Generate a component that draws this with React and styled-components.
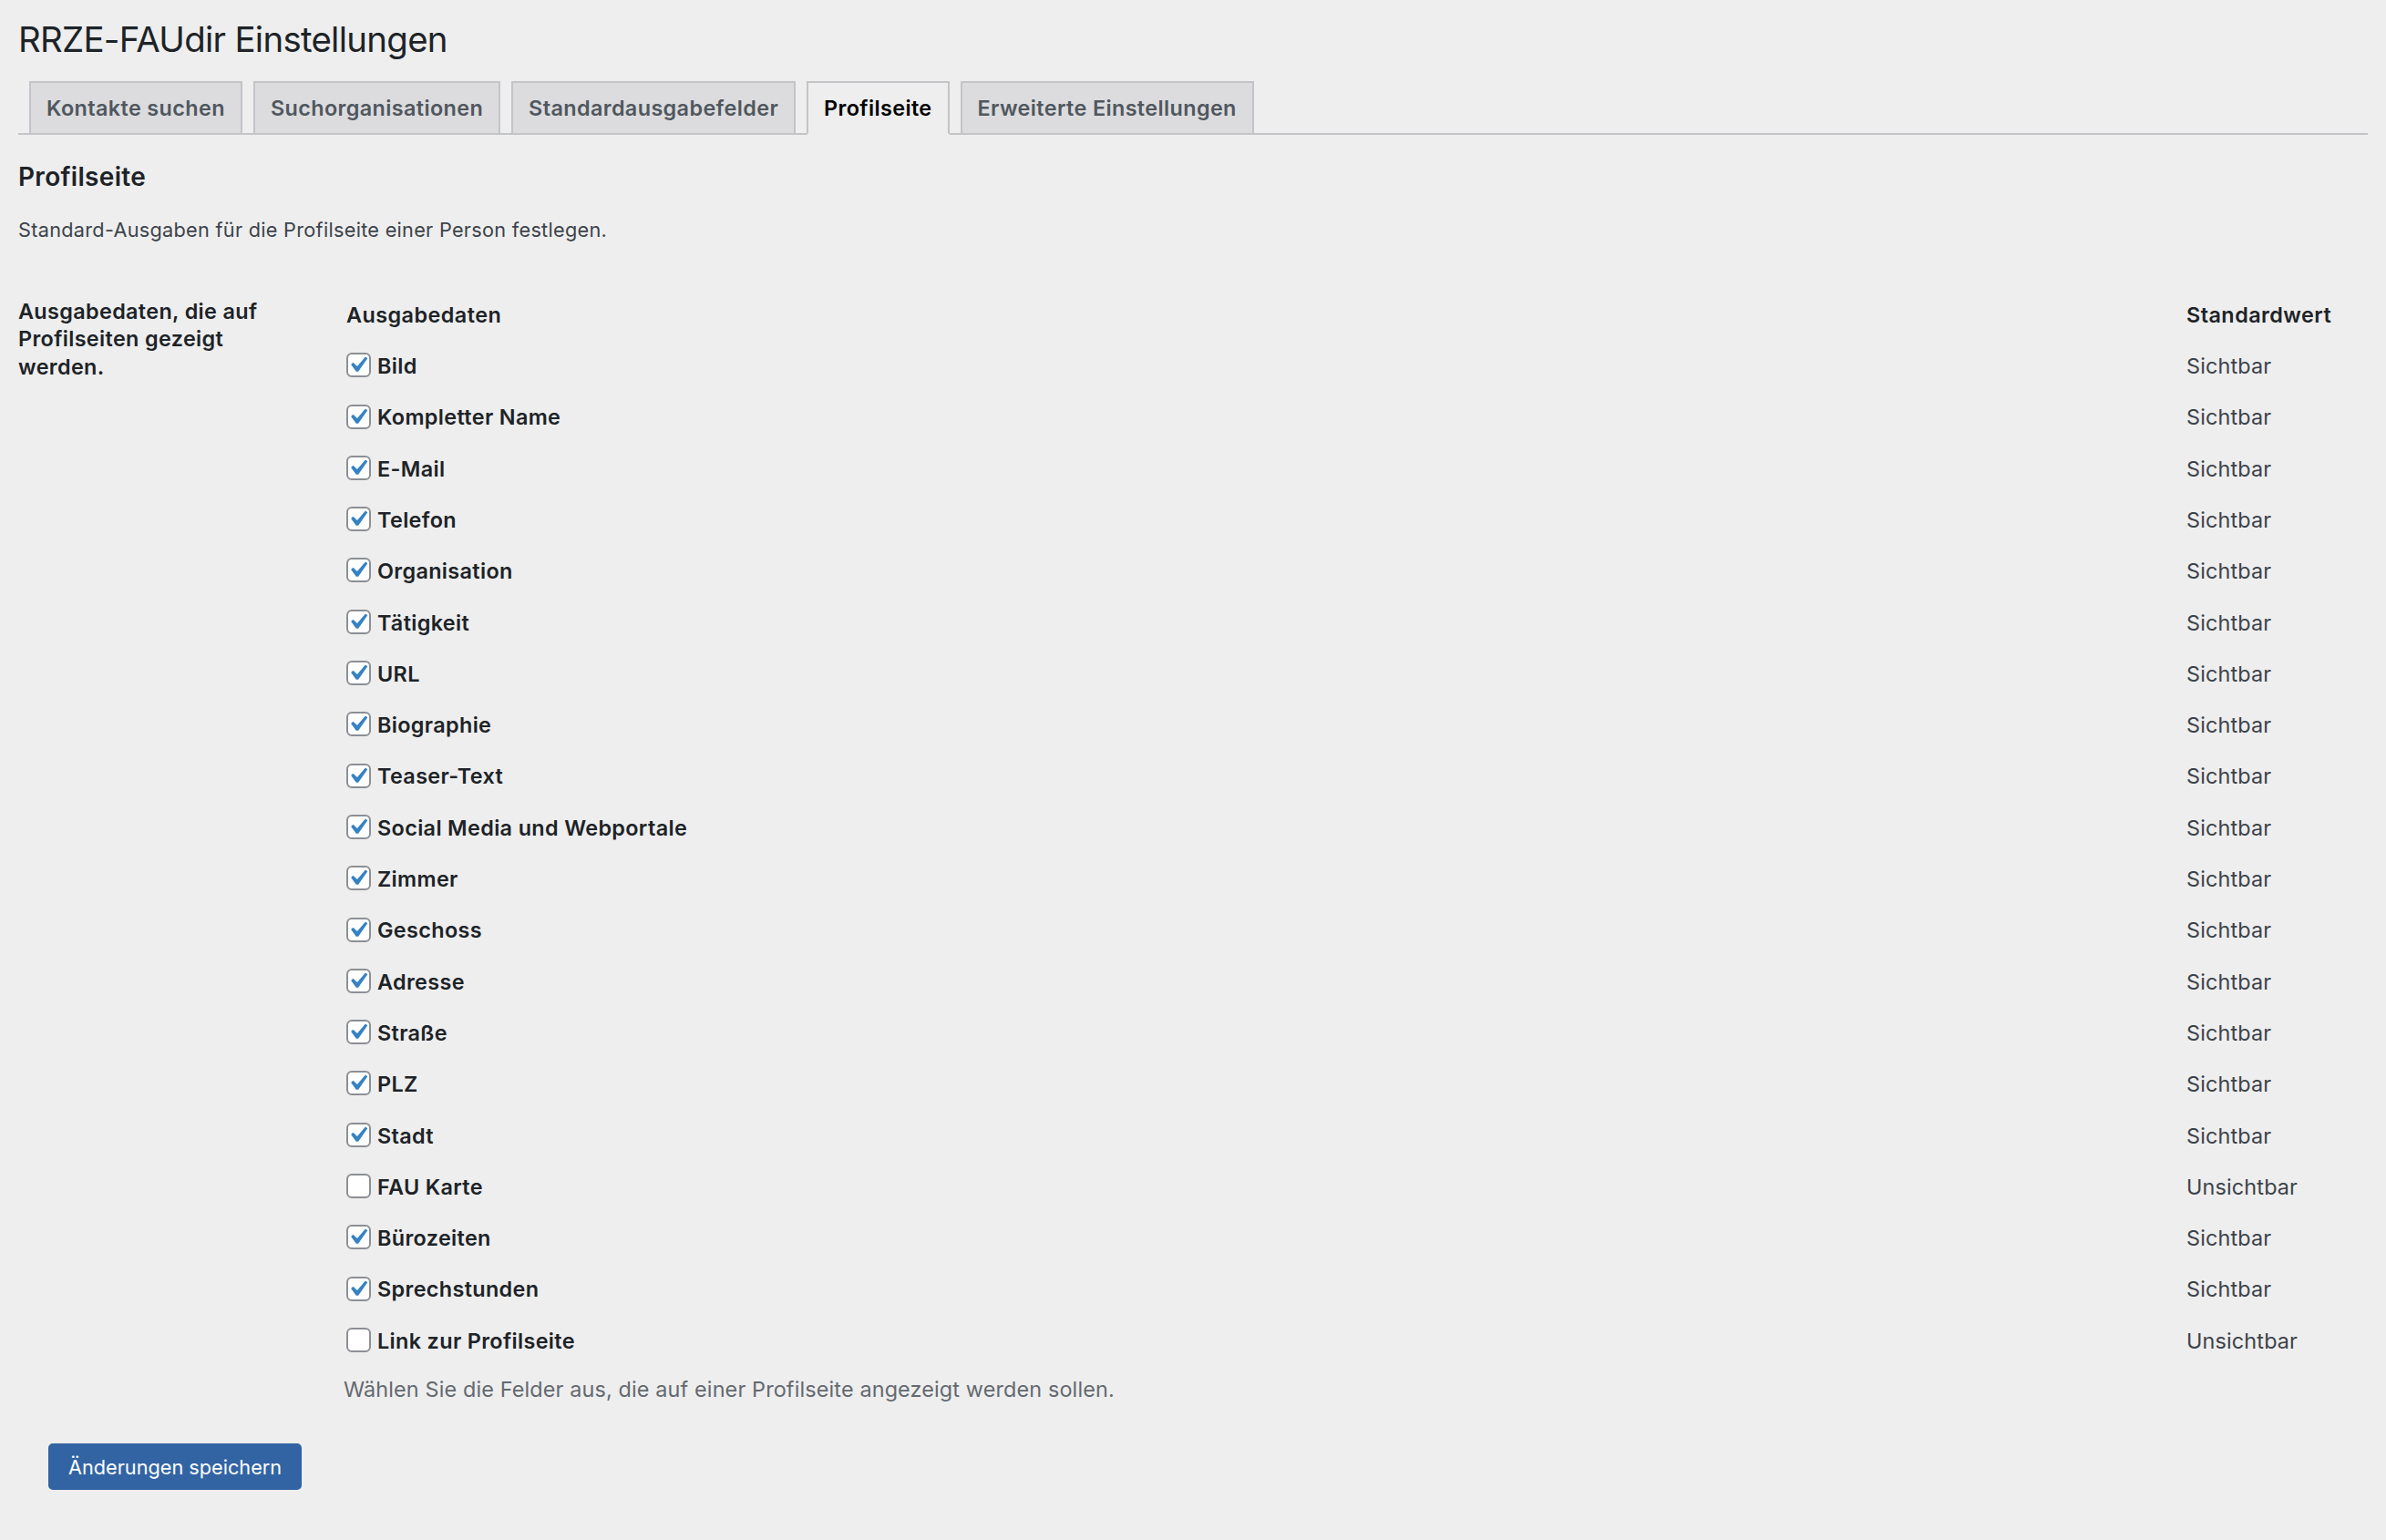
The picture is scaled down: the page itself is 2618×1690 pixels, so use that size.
import React from "react";
import styled, { createGlobalStyle } from "styled-components";

const GlobalStyle = createGlobalStyle`
  html, body {
    margin: 0;
    padding: 0;
    background: #eeeeee;
  }
  body {
    font-family: Inter, "Noto Sans", "Liberation Sans", sans-serif;
    color: #3c434a;
    font-size: 21.7px;
    min-height: 1690px;
  }
  * { box-sizing: border-box; }
`;

const Wrap = styled.div`
  padding: 0 20px 40px 20px;
`;

const Title = styled.h1`
  margin: 0;
  padding-top: 18px;
  font-size: 38.4px;
  line-height: 50px;
  font-weight: 400;
  letter-spacing: -0.7px;
  color: #1d2327;
`;

const TabBar = styled.nav`
  display: flex;
  gap: 12px;
  margin-top: 21px;
  padding-left: 12px;
  border-bottom: 2px solid #c3c4c7;
`;

const Tab = styled.a`
  display: block;
  margin-bottom: -2px;
  padding: 8px 17px;
  line-height: 39px;
  font-size: 23.4px;
  font-weight: 600;
  letter-spacing: 0.38px;
  text-decoration: none;
  border: 2px solid #c3c4c7;
  background: ${(p) => (p.$active ? "#eeeeee" : "#dcdcde")};
  border-bottom-color: ${(p) => (p.$active ? "#eeeeee" : "#c3c4c7")};
  color: ${(p) => (p.$active ? "#000" : "#50575e")};
  white-space: nowrap;
`;

const SectionTitle = styled.h2`
  margin: 27px 0 0;
  font-size: 28px;
  line-height: 39.2px;
  font-weight: 600;
  letter-spacing: 0.3px;
  color: #1d2327;
`;

const Intro = styled.p`
  margin: 22.6px 0 0;
  line-height: 30.4px;
  letter-spacing: 0.28px;
  color: #3c434a;
`;

const FormTable = styled.div`
  display: grid;
  grid-template-columns: 360px 1fr;
  margin-top: 50.6px;
  font-size: 23.4px;
`;

const RowHead = styled.div`
  padding-top: 9px;
  width: 305px;
  font-weight: 600;
  line-height: 30.4px;
  letter-spacing: 0.35px;
  color: #1d2327;
`;

const FieldCell = styled.div`
  display: flex;
  flex-direction: column;
`;

const FieldList = styled.div`
  display: grid;
  grid-template-columns: 1fr 199px;
  grid-auto-rows: 56.3px;
`;

const Cell = styled.div`
  padding-top: 13px;
  line-height: 30.4px;
  font-weight: ${(p) => (p.$bold ? 600 : 400)};
  letter-spacing: ${(p) => (p.$bold ? "0.45px" : "0.15px")};
  color: ${(p) => (p.$bold ? "#1d2327" : "#3c434a")};
  white-space: nowrap;
`;

const Label = styled.label`
  display: flex;
  align-items: center;
  gap: 7px;
  padding-top: 13px;
  height: 43.4px;
  line-height: 30.4px;
  font-weight: 600;
  letter-spacing: 0.35px;
  color: #1d2327;
  white-space: nowrap;
`;

const Box = styled.span`
  position: relative;
  flex: none;
  width: 27px;
  height: 27px;
  margin-bottom: 3px;
  border: 2px solid #8c8f94;
  border-radius: 6px;
  background: #ffffff;
  svg {
    position: absolute;
    left: -7px;
    top: -6px;
    width: 35px;
    height: 35px;
  }
`;

const Hint = styled.p`
  margin: 10px 0 0 -3px;
  line-height: 30.4px;
  letter-spacing: 0.14px;
  color: #646970;
`;

const Submit = styled.div`
  margin-top: 43.6px;
  padding-left: 33px;
`;

const Button = styled.button`
  display: inline-flex;
  align-items: center;
  height: 51px;
  padding: 0 20px;
  border: 2px solid #3264a3;
  border-radius: 5px;
  background: #3264a3;
  color: #ffffff;
  font-family: inherit;
  font-size: 21.7px;
  cursor: pointer;
`;

const Check = ({ checked }) => (
  <Box>
    {checked && (
      <svg viewBox="0 0 20 20">
        <path
          d="M14.83 4.89l1.34.94-5.81 8.38H9.02L5.78 9.67l1.34-1.25 2.57 2.4z"
          fill="#3582c4"
        />
      </svg>
    )}
  </Box>
);

const tabs = [
  "Kontakte suchen",
  "Suchorganisationen",
  "Standardausgabefelder",
  "Profilseite",
  "Erweiterte Einstellungen",
];

const fields = [
  ["Bild", true],
  ["Kompletter Name", true],
  ["E-Mail", true],
  ["Telefon", true],
  ["Organisation", true],
  ["Tätigkeit", true],
  ["URL", true],
  ["Biographie", true],
  ["Teaser-Text", true],
  ["Social Media und Webportale", true],
  ["Zimmer", true],
  ["Geschoss", true],
  ["Adresse", true],
  ["Straße", true],
  ["PLZ", true],
  ["Stadt", true],
  ["FAU Karte", false],
  ["Bürozeiten", true],
  ["Sprechstunden", true],
  ["Link zur Profilseite", false],
];

export default function App() {
  return (
    <>
      <GlobalStyle />
      <Wrap>
        <Title>RRZE-FAUdir Einstellungen</Title>
        <TabBar>
          {tabs.map((t) => (
            <Tab key={t} $active={t === "Profilseite"}>
              {t}
            </Tab>
          ))}
        </TabBar>
        <SectionTitle>Profilseite</SectionTitle>
        <Intro>Standard-Ausgaben für die Profilseite einer Person festlegen.</Intro>
        <FormTable>
          <RowHead>Ausgabedaten, die auf Profilseiten gezeigt werden.</RowHead>
          <FieldCell>
            <FieldList>
              <Cell $bold>Ausgabedaten</Cell>
              <Cell $bold>Standardwert</Cell>
              {fields.map(([name, on]) => (
                <React.Fragment key={name}>
                  <Label>
                    <Check checked={on} />
                    {name}
                  </Label>
                  <Cell>{on ? "Sichtbar" : "Unsichtbar"}</Cell>
                </React.Fragment>
              ))}
            </FieldList>
            <Hint>Wählen Sie die Felder aus, die auf einer Profilseite angezeigt werden sollen.</Hint>
          </FieldCell>
        </FormTable>
        <Submit>
          <Button>Änderungen speichern</Button>
        </Submit>
      </Wrap>
    </>
  );
}
